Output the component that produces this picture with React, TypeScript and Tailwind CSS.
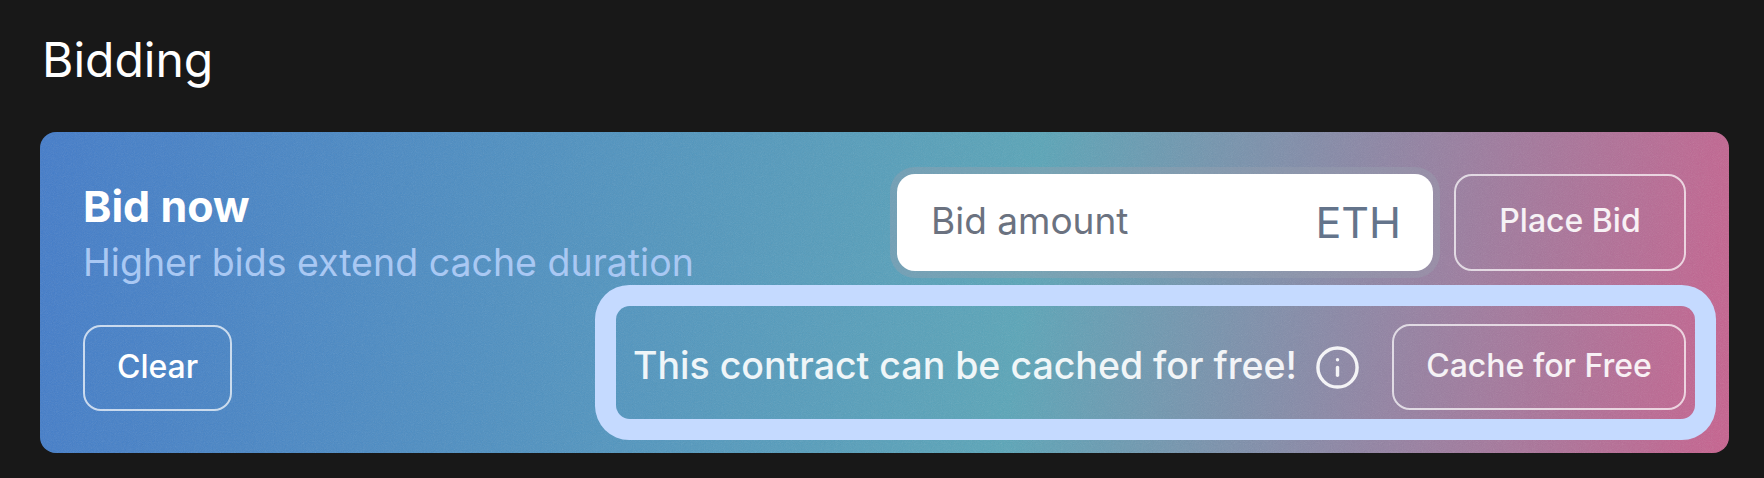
import { Info } from 'lucide-react';

export default function App() {
  return (
    <div className="h-[478px] w-[1764px] overflow-hidden bg-[#181818] pl-10 pr-[35px] pt-[32px] font-['Inter',sans-serif]">
      <h2 className="mb-[44px] ml-[2px] text-[48px] font-normal leading-[56px] text-white">Bidding</h2>

      <div className="relative flex h-[321px] justify-between overflow-hidden rounded-[16px] bg-[linear-gradient(97deg,#437cca_0%,#5aa5b8_58%,#c8628f_100%)] px-[43px] pb-[42px] pt-[42px]">
        {/* grain over the gradient */}
        <svg className="pointer-events-none absolute inset-0 h-full w-full opacity-[0.16]">
          <filter id="grain">
            <feTurbulence type="fractalNoise" baseFrequency="1.1" numOctaves="2" stitchTiles="stitch" />
            <feColorMatrix type="saturate" values="0" />
          </filter>
          <rect width="100%" height="100%" filter="url(#grain)" />
        </svg>

        {/* Left column */}
        <div className="relative flex w-[500px] flex-col justify-between">
          <div className="whitespace-nowrap pt-[7px]">
            <h3 className="text-[43px] font-bold leading-[50px] text-white">Bid now</h3>
            <p className="mt-[7px] text-[37.5px] font-normal leading-[50px] text-[#a9c8f3]">Higher bids extend cache duration</p>
          </div>
          <button className="h-[86px] w-[149px] rounded-[18px] border-2 border-white/70 pb-[2px] text-[32px] font-medium text-white">
            Clear
          </button>
        </div>

        {/* Right column */}
        <div className="relative flex flex-col items-end">
          <div className="flex gap-[21px]">
            <div className="flex h-[97px] w-[536px] items-center justify-between rounded-[18px] bg-white pl-[34px] pr-[32px] ring-[7px] ring-gray-400/40">
              <input
                placeholder="Bid amount"
                className="mb-[4px] w-[320px] bg-transparent text-[37px] text-gray-700 outline-none placeholder:text-[#6b7280]"
              />
              <span className="text-[43px] text-[#64748b]">ETH</span>
            </div>
            <button className="h-[97px] w-[232px] rounded-[18px] border-2 border-white/70 pb-[4px] text-[32px] font-medium text-white/90">
              Place Bid
            </button>
          </div>

          <div className="-mr-[9px] mt-[35px] flex w-[1079px] items-center rounded-[14px] pb-[9px] pl-[17px] pr-[9px] pt-[18px] ring-[21px] ring-[#c5daff]">
            <span className="w-[660px] whitespace-nowrap pb-[2px] text-[37.5px] font-medium leading-none text-white/90">This contract can be cached for free!</span>
            <Info className="ml-[21px] mr-[31px] text-white/90" size={47} strokeWidth={1.75} />
            <button className="h-[86px] w-[294px] rounded-[18px] border-2 border-white/70 pb-[2px] text-[32px] font-medium text-white/90">
              Cache for Free
            </button>
          </div>
        </div>
      </div>
    </div>
  );
}
